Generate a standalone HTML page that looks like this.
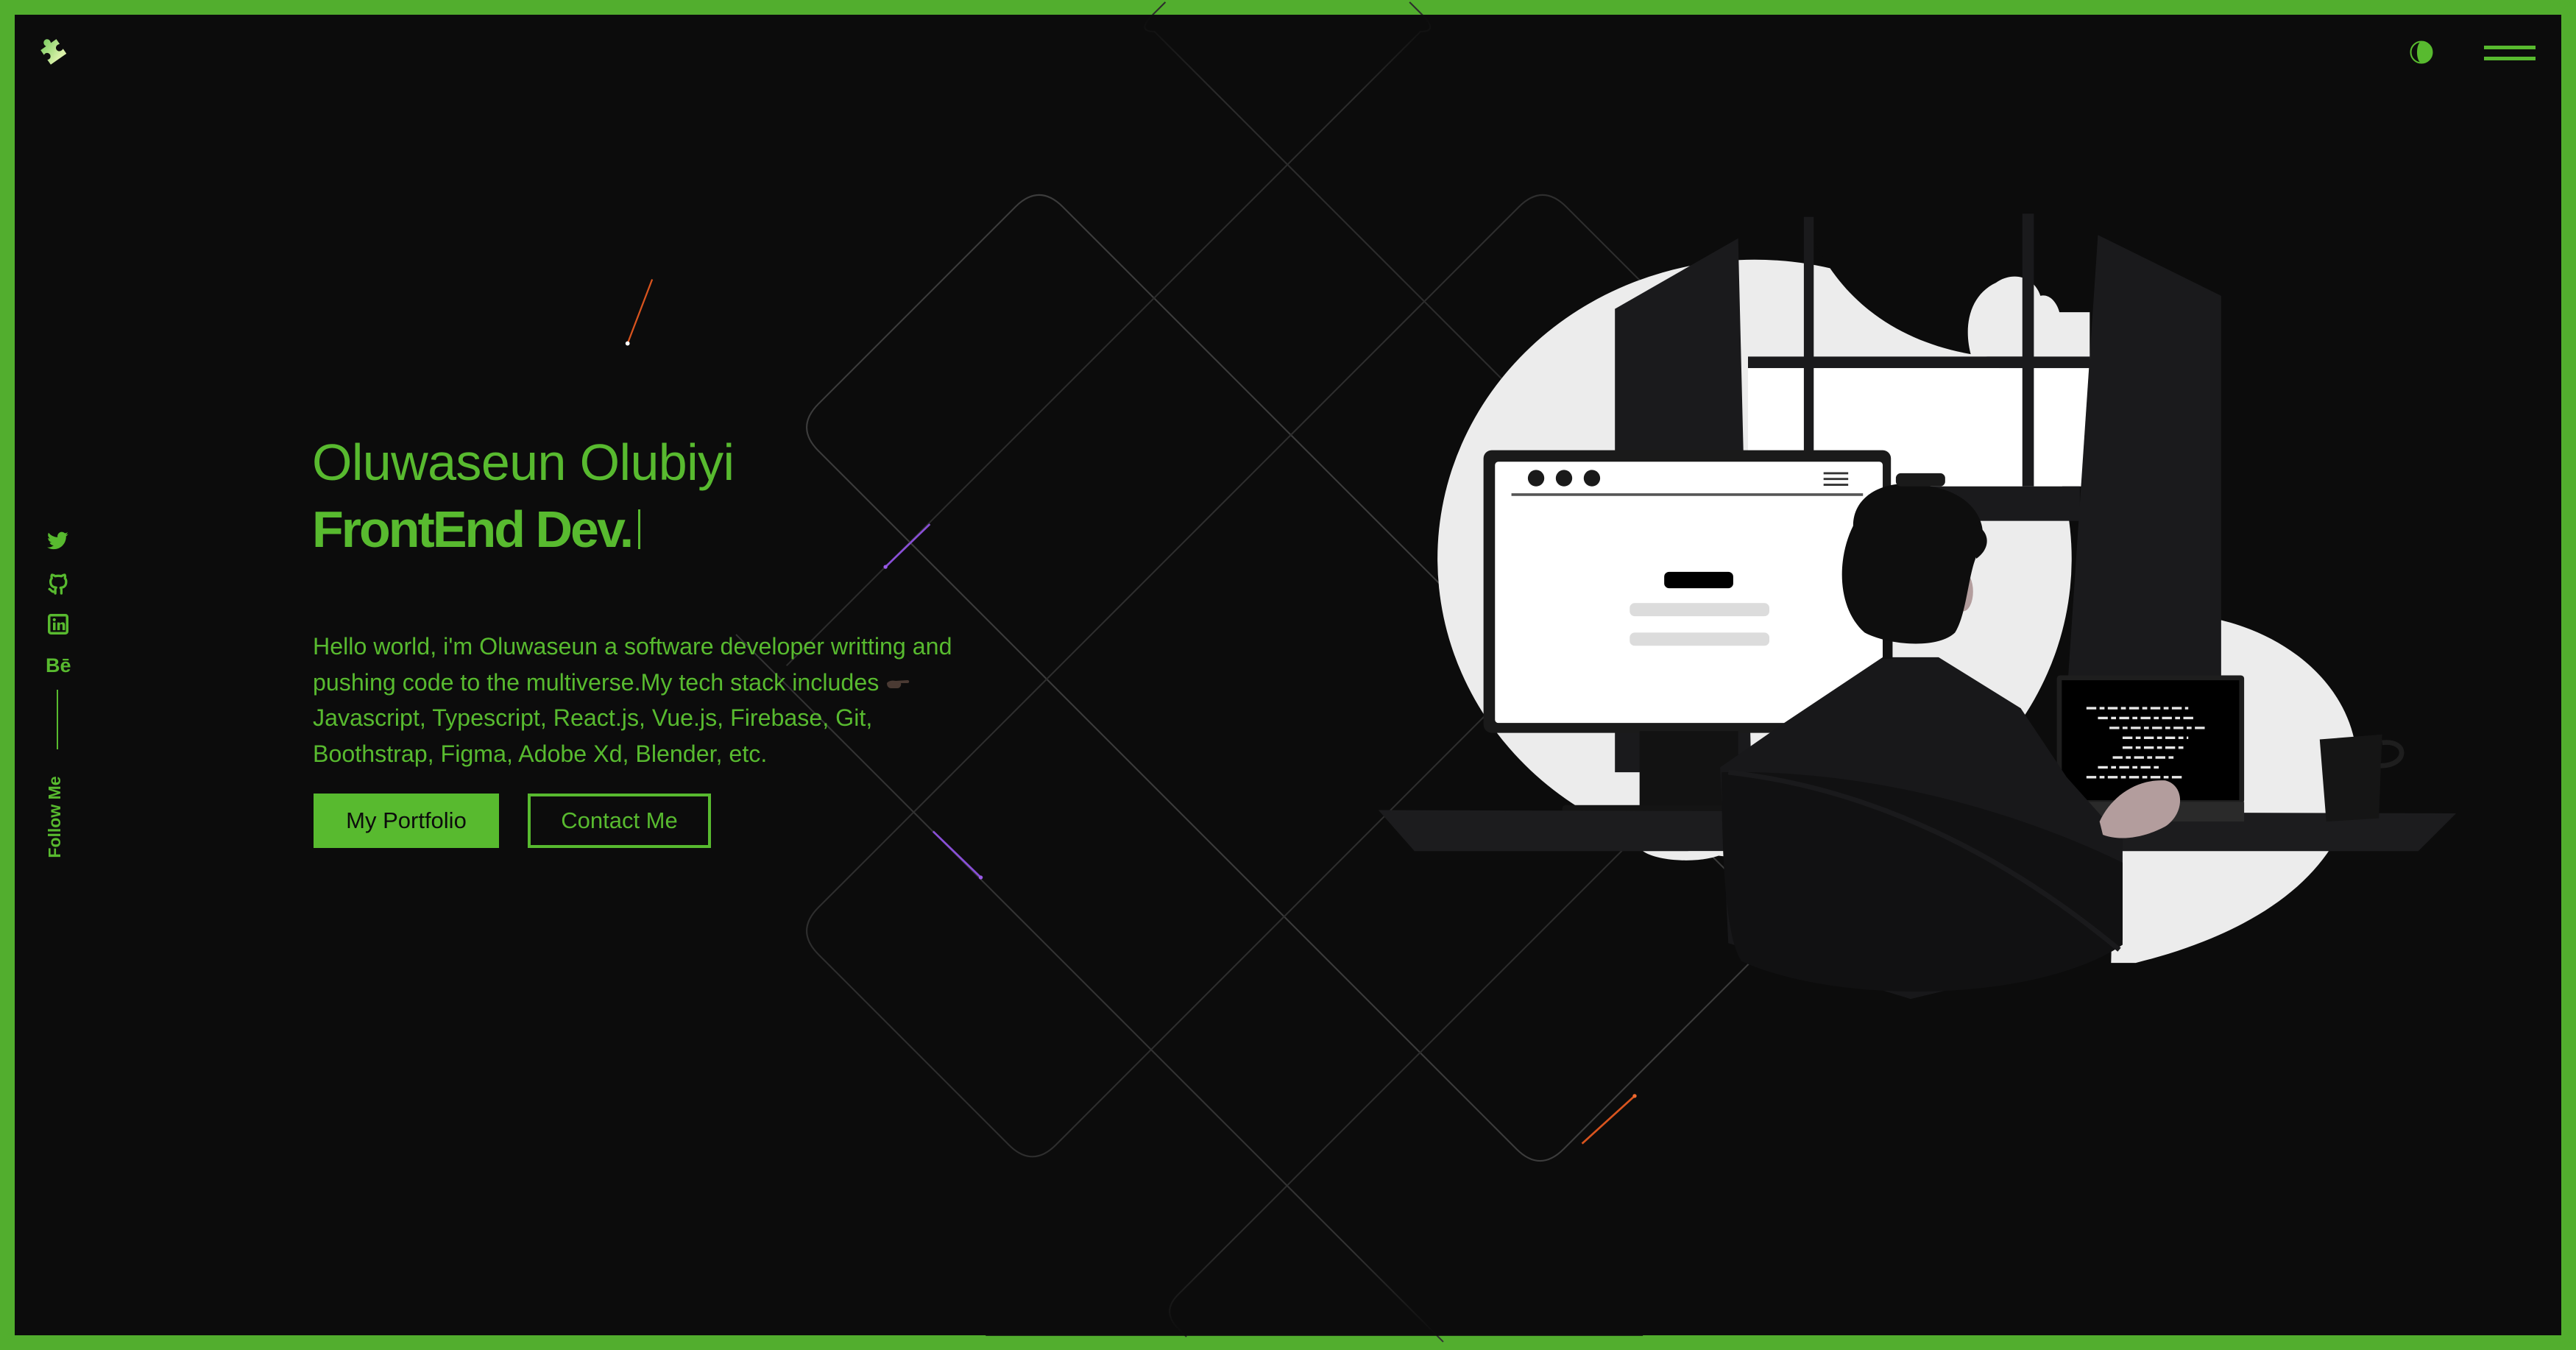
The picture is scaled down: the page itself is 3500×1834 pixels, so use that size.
<!DOCTYPE html>
<html><head><meta charset="utf-8"><style>
html,body{margin:0;padding:0;}
body{width:3500px;height:1834px;position:relative;overflow:hidden;background:#52ae2e;font-family:"Liberation Sans",sans-serif;}
#main{position:absolute;left:20px;top:20px;width:3460px;height:1794px;background:#0c0c0c;}
.abs{position:absolute;white-space:nowrap;}
.g{color:#58ba2f;}
</style></head><body>
<div id="main"></div>

<svg class="abs" style="left:0;top:0" width="3500" height="1834" viewBox="0 0 1568 821.6">
 <defs>
  <linearGradient id="fadeT" x1="0" y1="0" x2="0" y2="1"><stop offset="0" stop-color="#0c0c0c" stop-opacity="1"/><stop offset="1" stop-color="#0c0c0c" stop-opacity="0"/></linearGradient>
  <linearGradient id="fadeB" x1="0" y1="1" x2="0" y2="0"><stop offset="0" stop-color="#0c0c0c" stop-opacity="1"/><stop offset="1" stop-color="#0c0c0c" stop-opacity="0"/></linearGradient>
 </defs>
 <g transform="translate(448,8.96) scale(0.5125)" fill="none" stroke="#3a3a3a" stroke-width="1.8">
  <path d="M98,462 L332,228 Q360,200 388,228 L1217,1057 Q1245,1085 1217,1113 L983,1347 Q955,1375 927,1347 L98,518 Q70,490 98,462Z" stroke="#3c3c3c"/>
  <path d="M98,1060 L930,228 Q958,200 986,228 L1212,454 Q1240,482 1212,510 L380,1342 Q352,1370 324,1342 L98,1116 Q70,1088 98,1060Z" stroke="#2e2e2e"/>
  <path d="M510,-15 L495,0 Q475,20 497,20 L1000,523" stroke="#2c2c2c"/>
  <path d="M800,-15 L815,0 Q835,20 813,20 L60,773" stroke="#2c2c2c"/>
  <path d="M1120,925 L525,1520 Q505,1540 525,1560 L535,1570" stroke="#2c2c2c"/>
  <path d="M0,736 L840,1576" stroke="#333"/>
 </g>
 <rect x="600" y="9" width="400" height="50" fill="url(#fadeT)"/>
 <rect x="600" y="760" width="400" height="53" fill="url(#fadeB)"/>
 <line x1="382" y1="209" x2="397" y2="170" stroke="#d9541e" stroke-width="1"/>
 <circle cx="382" cy="209" r="1.3" fill="#fff"/>
 <line x1="539" y1="345" x2="566" y2="319" stroke="#8a4fd8" stroke-width="1.2"/>
 <circle cx="539" cy="345" r="1.2" fill="#9a5ae8"/>
 <line x1="568" y1="506" x2="597" y2="534" stroke="#8a4fd8" stroke-width="1.2"/>
 <circle cx="597" cy="534" r="1.2" fill="#9a5ae8"/>
 <line x1="995" y1="667" x2="963" y2="696" stroke="#d9541e" stroke-width="1.2"/>
 <circle cx="995" cy="667" r="1.2" fill="#f06a30"/>

 <ellipse cx="1068" cy="340" rx="193" ry="182" fill="#ececec"/>
 <path d="M1290,378 C1345,362 1420,392 1433,450 C1442,520 1385,565 1300,586 L1285,586 Z" fill="#ececec"/>
 <rect x="1064" y="190" width="208" height="34" fill="#ececec"/>
 <path d="M1104,128 L1236,128 L1236,217 L1210,217 C1165,212 1125,190 1104,146 Z" fill="#0c0c0c"/>
 <path d="M1200,217 C1195,200 1198,180 1215,172 C1225,165 1238,168 1242,180 C1250,178 1256,190 1254,200 C1262,198 1272,205 1272,217 Z" fill="#ececec"/>
 <rect x="1064" y="224" width="208" height="72" fill="#ffffff"/>
 <rect x="1064" y="217" width="208" height="7" fill="#1a1a1c"/>
 <rect x="1098" y="132" width="6" height="144" fill="#1a1a1c"/>
 <rect x="1231" y="130" width="7" height="166" fill="#1a1a1c"/>
 <rect x="1150" y="296" width="116" height="21" fill="#1a1a1c"/>
 <path d="M983,188 L1058,145 L1066,470 L983,470 Z" fill="#1a1a1c"/>
 <path d="M1277,143 L1352,180 L1352,430 L1257,440 Z" fill="#1a1a1c"/>
 <rect x="903" y="274" width="248" height="172" rx="5" fill="#1a1a1a"/>
 <rect x="910" y="281" width="236" height="159" rx="2" fill="#fff"/>
 <circle cx="935" cy="291" r="5" fill="#1a1a1a"/>
 <circle cx="952" cy="291" r="5" fill="#1a1a1a"/>
 <circle cx="969" cy="291" r="5" fill="#1a1a1a"/>
 <line x1="920" y1="301" x2="1134" y2="301" stroke="#555" stroke-width="1.6"/>
 <g stroke="#333" stroke-width="1.3"><line x1="1110" y1="288" x2="1125" y2="288"/><line x1="1110" y1="291.5" x2="1125" y2="291.5"/><line x1="1110" y1="295" x2="1125" y2="295"/></g>
 <rect x="1013" y="348" width="42" height="10" rx="3" fill="#000"/>
 <rect x="992" y="367" width="85" height="8" rx="3" fill="#dcdcdc"/>
 <rect x="992" y="385" width="85" height="8" rx="3" fill="#dcdcdc"/>
 <rect x="998" y="445" width="60" height="48" fill="#121212"/>
 <rect x="951" y="490" width="100" height="16" rx="2" fill="#141414"/>
 <path d="M839,493 L1495,495 L1472,518 L861,518 Z" fill="#1c1c1e"/>
 <path d="M1000,518 C1010,525 1040,526 1052,518 Z" fill="#ececec"/>
 <rect x="1252" y="411" width="114" height="78" rx="2" fill="#1e1e1e"/>
 <rect x="1255" y="414" width="108" height="73" fill="#000"/>
 <g stroke="#e8e8e8" stroke-width="1.5" stroke-dasharray="6 2 3 2">
  <line x1="1270" y1="431" x2="1332" y2="431"/><line x1="1277" y1="437" x2="1336" y2="437"/>
  <line x1="1284" y1="443" x2="1344" y2="443"/><line x1="1292" y1="449" x2="1332" y2="449"/>
  <line x1="1292" y1="455" x2="1329" y2="455"/><line x1="1286" y1="461" x2="1323" y2="461"/>
  <line x1="1277" y1="467" x2="1316" y2="467"/><line x1="1270" y1="473" x2="1330" y2="473"/>
 </g>
 <rect x="1258" y="488" width="108" height="12" fill="#2a2a2a"/>
 <path d="M1412,450 L1450,447 L1448,498 L1416,500 Z" fill="#151515"/>
 <path d="M1450,452 C1466,450 1466,466 1449,466" fill="none" stroke="#1e1e1e" stroke-width="3"/>
 <path d="M1086,440 L1146,400 L1180,400 L1230,431 L1258,473 L1292,511 L1292,572 L1283,579 L1163,608 L1052,574 L1047,467 Z" fill="#18181a"/>
 <path d="M1048,470 C1130,468 1220,490 1292,525 L1292,575 C1240,610 1120,612 1060,585 C1050,570 1048,520 1048,470 Z" fill="#111112"/>
 <path d="M1052,470 C1140,480 1220,520 1290,578" fill="none" stroke="#1a1a1c" stroke-width="3"/>
 <path d="M1278,500 C1285,485 1300,474 1318,475 C1330,478 1330,495 1318,503 C1305,510 1290,512 1280,508 Z" fill="#b39d9d"/>
 <rect x="1146" y="385" width="6" height="16" fill="#111"/>
 <ellipse cx="1195" cy="360" rx="6" ry="12" fill="#b39d9d"/>
 <path d="M1128,320 C1128,300 1150,290 1175,296 C1200,300 1212,318 1205,335 C1198,345 1198,372 1190,385 C1180,395 1150,393 1135,385 C1118,370 1118,340 1128,320 Z" fill="#0e0e0e"/>
 <rect x="1154" y="288" width="30" height="8" rx="3" fill="#1a1a1a"/>
 <path d="M1198,318 C1210,320 1214,332 1203,340 Z" fill="#0e0e0e"/>
</svg>

<svg class="abs" style="left:48px;top:45px" width="46" height="46" viewBox="0 0 46 46">
 <defs><linearGradient id="pg" x1="0" y1="0" x2="0.3" y2="1"><stop offset="0" stop-color="#74c95a"/><stop offset="1" stop-color="#d8f0a8"/></linearGradient></defs>
 <g transform="rotate(-35 23 23)"><path d="M10,14 L19,14 C17,9 20,6 23,6 C26,6 29,9 27,14 L36,14 L36,22 C31,20 28,23 28,26 C28,29 31,32 36,30 L36,38 L10,38 L10,30 C14,32 17,29 17,26 C17,23 14,20 10,22 Z" fill="url(#pg)"/></g>
</svg>

<svg class="abs" style="left:3270px;top:51px" width="40" height="40" viewBox="0 0 40 40">
 <circle cx="20" cy="20" r="14.5" fill="none" stroke="#58ba2f" stroke-width="2"/>
 <path d="M20,5.5 A14.5,14.5 0 0 1 20,34.5 A6,14.5 0 0 1 20,5.5Z" fill="#58ba2f"/>
</svg>
<div class="abs" style="left:3375px;top:62px;width:70px;height:5px;background:#58ba2f"></div>
<div class="abs" style="left:3375px;top:77px;width:70px;height:5px;background:#58ba2f"></div>

<svg class="abs" style="left:64px;top:722px" width="30" height="28" viewBox="0 0 24 22"><path fill="#58ba2f" d="M23 2.6a9.4 9.4 0 0 1-2.7.7 4.7 4.7 0 0 0 2.1-2.6 9.4 9.4 0 0 1-3 1.1 4.7 4.7 0 0 0-8 4.3A13.3 13.3 0 0 1 1.6 1.2a4.7 4.7 0 0 0 1.5 6.3 4.7 4.7 0 0 1-2.1-.6v.1a4.7 4.7 0 0 0 3.8 4.6 4.7 4.7 0 0 1-2.1.1 4.7 4.7 0 0 0 4.4 3.3A9.4 9.4 0 0 1 0 17a13.3 13.3 0 0 0 7.2 2.1c8.6 0 13.4-7.200 13.4-13.4v-.6A9.6 9.6 0 0 0 23 2.6z"/></svg>
<svg class="abs" style="left:64px;top:778px" width="30" height="30" viewBox="0 0 24 24"><path fill="none" stroke="#58ba2f" stroke-width="2.6" stroke-linecap="round" stroke-linejoin="round" d="M9 20.5c-4.5 1.2-4.5-2.2-6.5-2.7m13 4.7v-3.6a3.2 3.2 0 0 0-.9-2.5c3-.3 6.1-1.5 6.1-6.6A5.1 5.1 0 0 0 19.3 6a4.8 4.8 0 0 0-.1-3.6s-1.1-.3-3.7 1.4a12.7 12.7 0 0 0-6.6 0C6.3 2.1 5.2 2.4 5.2 2.4A4.8 4.8 0 0 0 5.1 6a5.1 5.1 0 0 0-1.4 3.6c0 5.1 3.1 6.300 6.1 6.6a3.2 3.2 0 0 0-.9 2.5v3.8"/></svg>
<svg class="abs" style="left:65px;top:834px" width="28" height="28" viewBox="0 0 24 24"><rect x="1.5" y="1.5" width="21" height="21" rx="2" fill="none" stroke="#58ba2f" stroke-width="3"/><rect x="6" y="10" width="3" height="9" fill="#58ba2f"/><circle cx="7.5" cy="6.8" r="1.8" fill="#58ba2f"/><path d="M11 10h3v1.5c.8-1.3 2-1.8 3.2-1.8 2 0 2.8 1.3 2.8 3.5V19h-3v-5.3c0-1.2-.4-1.8-1.4-1.8S14 12.6 14 13.8V19h-3z" fill="#58ba2f"/></svg>
<div class="abs g" style="left:62px;top:889px;font-size:27px;font-weight:bold;line-height:30px">Bē</div>
<div class="abs" style="left:77px;top:937px;width:2px;height:81px;background:#58ba2f"></div>
<div class="abs g" style="left:74px;top:1110px;font-size:23px;font-weight:bold;transform:translate(-50%,-50%) rotate(-90deg);line-height:26px">Follow Me</div>

<div class="abs g" style="left:424px;top:593px;font-size:70px;line-height:70px;letter-spacing:-0.6px">Oluwaseun Olubiyi</div>
<div class="abs g" style="left:424px;top:684px;font-size:70px;line-height:70px;font-weight:bold;letter-spacing:-3px">FrontEnd Dev.</div>
<div class="abs" style="left:867px;top:692px;width:3px;height:54px;background:#58ba2f"></div>
<div class="abs g" style="left:425px;top:854px;font-size:32.2px;line-height:48.5px">Hello world, i'm Oluwaseun a software developer writting and<br>pushing code to the multiverse.My tech stack includes <svg width="34" height="20" viewBox="0 0 34 20" style="vertical-align:-2px"><path d="M2,8 C4,5 9,4 14,5 L30,4 C33,4 33,8 30,8 L21,8 C22,11 20,15 16,15 L8,15 C4,15 2,12 2,8Z" fill="#4a3a33"/></svg><br>Javascript, Typescript, React.js, Vue.js, Firebase, Git,<br>Boothstrap, Figma, Adobe Xd, Blender, etc.</div>

<div class="abs" style="left:426px;top:1078px;width:252px;height:74px;background:#58ba2f;color:#0c0c0c;font-size:31px;line-height:74px;text-align:center">My Portfolio</div>
<div class="abs g" style="left:717px;top:1078px;width:241px;height:66px;border:4px solid #58ba2f;font-size:31px;line-height:66px;text-align:center">Contact Me</div>
</body></html>
